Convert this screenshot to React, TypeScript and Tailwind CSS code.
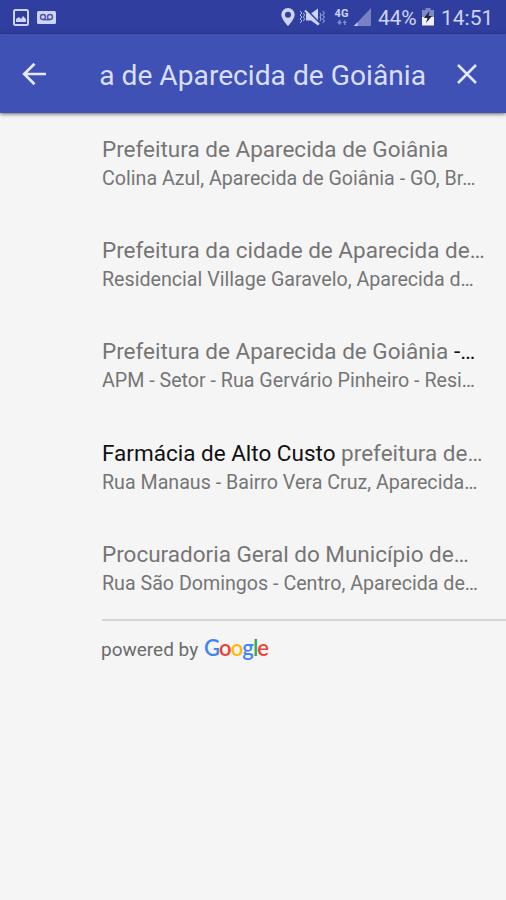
import type { ReactNode } from "react";

type Result = { title: ReactNode; address: string };

const results: Result[] = [
  { title: "Prefeitura de Aparecida de Goiânia", address: "Colina Azul, Aparecida de Goiânia - GO, Br…" },
  { title: "Prefeitura da cidade de Aparecida de…", address: "Residencial Village Garavelo, Aparecida d…" },
  {
    title: <>Prefeitura de Aparecida de Goiânia <span className="text-[#111111]">-…</span></>,
    address: "APM - Setor - Rua Gervário Pinheiro - Resi…",
  },
  {
    title: <><span className="text-[#111111]">Farmácia de Alto Custo</span> prefeitura de…</>,
    address: "Rua Manaus - Bairro Vera Cruz, Aparecida…",
  },
  { title: "Procuradoria Geral do Município de…", address: "Rua São Domingos - Centro, Aparecida de…" },
];

function StatusBar() {
  return (
    <div className="flex h-[34px] items-center bg-[#303f9f] pl-[13px] pr-[12px] text-[#cdd4f5]">
      <svg className="h-[17px] w-[16px]" viewBox="0 0 16 17" fill="none">
        <rect x="1" y="1" width="14" height="15" rx="1.5" stroke="currentColor" strokeWidth="2" />
        <path d="M3 13V10l3-2 2 2 2-3 3 3v3z" fill="currentColor" />
      </svg>
      <svg className="ml-[8px] h-[13px] w-[19px]" viewBox="0 0 19 13" fill="none">
        <rect width="19" height="13" rx="1.5" fill="currentColor" />
        <g stroke="#4b58ac" strokeWidth="1.4">
          <circle cx="6" cy="6" r="2.5" />
          <circle cx="13" cy="6" r="2.5" />
          <path d="M6 8.7h7" />
        </g>
      </svg>
      <div className="flex-1" />
      <svg className="h-[18px] w-[14px]" viewBox="0 0 14 18">
        <path fill="currentColor" fillRule="evenodd" d="M7 0a6.7 6.7 0 0 0-6.7 6.7C.3 11 7 18 7 18s6.700-7 6.700-11.300A6.700 6.700 0 0 0 7 0Zm0 3.700a3 3 0 1 1 0 6 3 3 0 0 1 0-6Z" />
      </svg>
      <svg className="ml-[4px] h-[18px] w-[26px]" viewBox="0 0 26 18" fill="none" stroke="currentColor">
        <path fill="currentColor" stroke="none" d="M7 5.500h5l7-5v17l-7-5H7z" />
        <path d="M7.500 2 20.500 15" stroke="#303f9f" strokeWidth="2" />
        <path d="M6 2.500 20 16.500" strokeWidth="2" />
        <path d="m1 3 2 2-2 2 2 2-2 2 2 2-2 2M4.500 5l1 2-1 2 1 2-1 2M21 5l1 2-1 2 1 2-1 2M23.500 3l2 2-2 2 2 2-2 2 2 2-2 2" strokeWidth="1" opacity=".8" />
      </svg>
      <div className="ml-[9px] flex h-[18px] w-[15px] flex-col items-center">
        <span className="font-[Roboto] text-[11px] font-bold leading-[11px]">4G</span>
        <svg className="mt-px h-[5px] w-[10px] opacity-50" viewBox="0 0 10 5" fill="currentColor">
          <path d="M1.500 0h2v2H5L2.500 5 0 2h1.500zM7 5h1.500V3H10L7.700 0 5.500 3H7z" />
        </svg>
      </div>
      <svg className="ml-[5px] h-[18px] w-[17px]" viewBox="0 0 17 18" fill="currentColor">
        <path d="M17 0v18H0z" opacity=".45" />
        <path d="M3.500 14.300V18H0z" />
      </svg>
      <span className="ml-[7px] mt-[2px] w-[39px] whitespace-nowrap text-[21px] leading-[24px] tracking-[-0.200px]">44%</span>
      <svg className="ml-[5px] h-[18px] w-[12px]" viewBox="0 0 12 18">
        <path fill="#7e88c5" d="M3.500 0h5v2H12v8H0V2h3.500z" />
        <path fill="#f0f1f8" d="M0 9h12v8.500H0z" />
        <path fill="#20243d" d="M7.500 3 2 10h3.500l-1.500 5 6-7H6.500z" />
      </svg>
      <span className="ml-[7px] mt-[2px] w-[53px] whitespace-nowrap text-[21px] leading-[24px]">14:51</span>
    </div>
  );
}

export default function App() {
  return (
    <div className="flex h-[900px] w-[506px] flex-col overflow-hidden bg-[#f5f5f5] font-[Roboto,sans-serif]">
      <StatusBar />
      <header className="z-10 flex h-[79px] items-center bg-[#3f51b5] pl-[22px] text-[#d9dffb] shadow-[0_1px_4px_rgba(0,0,0,0.6)]">
        <svg className="h-[24px] w-[25px]" viewBox="0 0 25 24" fill="none" stroke="#e4e9ff" strokeWidth="2.700">
          <path d="M24 12H3M12.500 1.700 2.200 12l10.300 10.300" />
        </svg>
        <div className="ml-[53px] mt-[5px] flex w-[326px] justify-end overflow-hidden whitespace-nowrap text-[28.200px] leading-[36px]">
          <span>a de Aparecida de Goiânia</span>
        </div>
        <svg className="ml-[31px] h-[20px] w-[20px]" viewBox="0 0 20 20" fill="none" stroke="#e4e9ff" strokeWidth="2.500">
          <path d="m1 1 18 18M19 1 1 19" />
        </svg>
      </header>
      <main className="flex flex-col pl-[102px] pt-[21px]">
        {results.map((result, index) => (
          <div key={index} className="h-[101.200px] whitespace-nowrap text-[#757575]">
            <div className="text-[22.500px] leading-[30px]"><span>{result.title}</span></div>
            <div className="text-[19.650px] leading-[30px]"><span>{result.address}</span></div>
          </div>
        ))}
        <div className="-mt-[21px] h-[2px] bg-[#d6d6d6]" />
        <div className="mt-[14px] flex items-baseline whitespace-nowrap font-[Roboto] text-[#6b6b6b]">
          <span className="-ml-px w-[103px] text-[19px] leading-[26px]">powered by</span>
          <span className="font-[Lato] text-[22px] font-semibold leading-[26px] tracking-[-0.900px]">
            <span className="text-[#4285f4]">G</span>
            <span className="text-[#ea4335]">o</span>
            <span className="text-[#fbbc05]">o</span>
            <span className="text-[#4285f4]">g</span>
            <span className="text-[#34a853]">l</span>
            <span className="text-[#ea4335]">e</span>
          </span>
        </div>
      </main>
    </div>
  );
}
